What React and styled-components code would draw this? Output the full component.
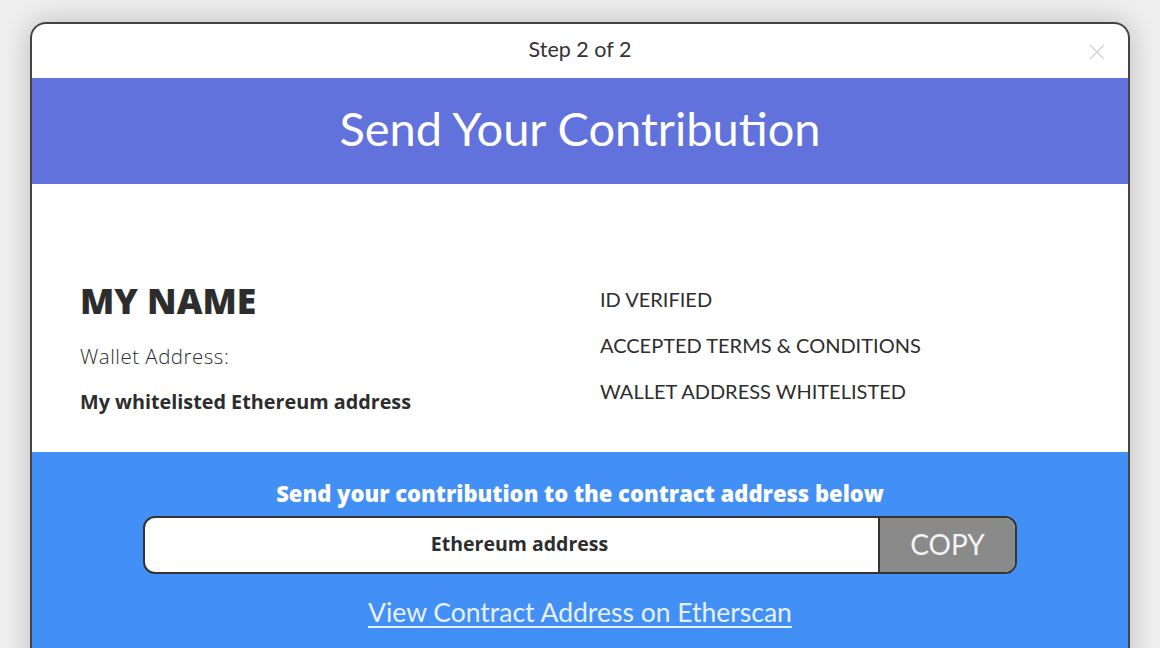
import React from 'react';
import styled, { createGlobalStyle } from 'styled-components';

const GlobalStyle = createGlobalStyle`
  html, body {
    margin: 0;
    padding: 0;
    background: #efefef;
    overflow: hidden;
    height: 648px;
  }
  body {
    font-family: Lato, "Open Sans", sans-serif;
    color: #333;
  }
`;

const Page = styled.div`
  padding: 22px 30px 0;
`;

const Modal = styled.div`
  width: 1096px;
  border: 2px solid #444;
  border-bottom: none;
  border-radius: 16px 16px 0 0;
  overflow: hidden;
  background: #fff;
  box-shadow: 0 0 28px rgba(0, 0, 0, 0.22);
`;

const Header = styled.div`
  position: relative;
  height: 54px;
  display: flex;
  align-items: center;
  justify-content: center;
  font-size: 21.5px;
  color: #333;
  padding-bottom: 4px;
  box-sizing: border-box;
`;

const Close = styled.button`
  position: absolute;
  right: 22px;
  top: 19px;
  width: 18px;
  height: 18px;
  padding: 0;
  border: none;
  background: none;
  cursor: pointer;
`;

const TitleBand = styled.div`
  height: 106px;
  background: #6172dc;
  display: flex;
  align-items: center;
  justify-content: center;
`;

const Title = styled.h1`
  margin: 0;
  font-size: 47px;
  font-weight: 400;
  color: #fff;
  padding-bottom: 6px;
`;

const Info = styled.div`
  height: 268px;
  box-sizing: border-box;
  padding: 94px 48px 0;
  display: grid;
  grid-template-columns: 520px 1fr;
`;

const Column = styled.div`
  display: flex;
  flex-direction: column;
  padding-top: ${(p) => p.$offset || 0}px;
`;

const Name = styled.div`
  font-family: "Open Sans", sans-serif;
  font-size: 35.5px;
  font-weight: 800;
  line-height: 44px;
  color: #2d2d2d;
  margin-bottom: 22px;
`;

const Label = styled.div`
  font-family: "Open Sans", sans-serif;
  font-size: ${(p) => (p.$bold ? 19.8 : 20.5)}px;
  font-weight: ${(p) => (p.$bold ? 700 : 300)};
  letter-spacing: ${(p) => (p.$bold ? 0 : 0.5)}px;
  line-height: 24px;
  margin-bottom: 22px;
  color: #2d2d2d;
`;

const Status = styled.div`
  font-size: 20px;
  line-height: 24px;
  margin-bottom: 22px;
  color: #2d2d2d;
  font-weight: 400;
`;

const Contract = styled.div`
  background: #4290f5;
  height: 240px;
  padding-top: 26px;
  box-sizing: border-box;
  display: flex;
  flex-direction: column;
  align-items: center;
`;

const Prompt = styled.div`
  font-family: "Open Sans", sans-serif;
  font-size: 22px;
  font-weight: 800;
  color: #fff;
  line-height: 30px;
`;

const AddressBox = styled.div`
  margin-top: 8px;
  width: 874px;
  height: 58px;
  box-sizing: border-box;
  border: 2px solid #333;
  border-radius: 12px;
  overflow: hidden;
  display: flex;
  background: #fff;
`;

const Address = styled.div`
  flex: 1;
  display: flex;
  align-items: center;
  justify-content: center;
  font-family: "Open Sans", sans-serif;
  font-size: 19.5px;
  font-weight: 700;
  color: #2d2d2d;
  padding: 0 0 4px 16px;
`;

const CopyButton = styled.button`
  width: 137px;
  border: none;
  border-left: 2px solid #333;
  background: #8a8a8a;
  color: #f4f4f4;
  font-family: inherit;
  font-size: 28px;
  font-weight: 400;
  cursor: pointer;
  padding: 0 0 2px;
`;

const EtherscanLink = styled.a`
  margin-top: 22px;
  font-size: 26.5px;
  color: #e8f0fd;
  text-decoration: underline;
  text-underline-offset: 4px;
  text-decoration-thickness: 2px;
`;

export default function App() {
  return (
    <>
      <GlobalStyle />
      <Page>
        <Modal>
          <Header>
            Step 2 of 2
            <Close aria-label="Close">
              <svg width="18" height="18" viewBox="0 0 18 18">
                <path d="M2 2 L16 16 M16 2 L2 16" stroke="#d6d6d6" strokeWidth="1.6" />
              </svg>
            </Close>
          </Header>
          <TitleBand>
            <Title>Send Your Contribution</Title>
          </TitleBand>
          <Info>
            <Column>
              <Name>MY NAME</Name>
              <Label>Wallet Address:</Label>
              <Label $bold>My whitelisted Ethereum address</Label>
            </Column>
            <Column $offset={9}>
              <Status>ID VERIFIED</Status>
              <Status>ACCEPTED TERMS &amp; CONDITIONS</Status>
              <Status>WALLET ADDRESS WHITELISTED</Status>
            </Column>
          </Info>
          <Contract>
            <Prompt>Send your contribution to the contract address below</Prompt>
            <AddressBox>
              <Address>Ethereum address</Address>
              <CopyButton>COPY</CopyButton>
            </AddressBox>
            <EtherscanLink href="#">View Contract Address on Etherscan</EtherscanLink>
          </Contract>
        </Modal>
      </Page>
    </>
  );
}
